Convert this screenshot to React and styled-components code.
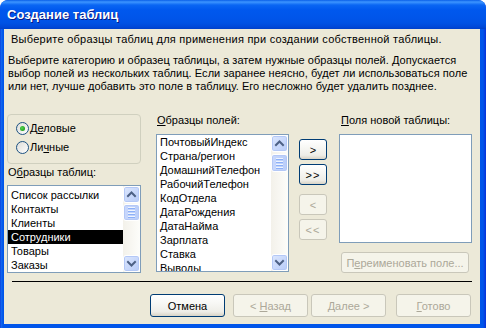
import React from 'react';
import styled, { createGlobalStyle } from 'styled-components';

const Global = createGlobalStyle`
  html, body { margin: 0; padding: 0; background: #ffffff; }
  body { font-family: "Liberation Sans", Arial, sans-serif; font-size: 11px; color: #000; }
  #root { width: 486px; height: 328px; }
`;

const Window = styled.div`
  width: 486px;
  height: 328px;
  box-sizing: border-box;
  display: flex;
  flex-direction: column;
  background: linear-gradient(to right, #0831D9 0px, #166AEE 1px, #0055EA 3px, #0055EA calc(100% - 3px), #0831D9 100%);
  border-radius: 8px 8px 0 0;
  overflow: hidden;
`;

const TitleBar = styled.div`
  height: 29px;
  flex: none;
  display: flex;
  align-items: center;
  padding: 0 0 0 7px;
  border-radius: 7px 7px 0 0;
  background: linear-gradient(to bottom, #0A5FE8 0px, #3D95FF 2px, #0A66F3 5px, #0058EE 10px, #0055EA 18px, #0052E4 23px, #0048D8 27px, #0041C8 29px);
  color: #fff;
  font-family: "Liberation Sans", Arial, sans-serif;
  font-weight: bold;
  font-size: 13px;
  text-shadow: 1px 1px 0 #0A1883;
`;

const Content = styled.div`
  flex: 1;
  margin: 0 6px 4px 4px;
  background: #ECE9D8;
  display: flex;
  flex-direction: column;
`;

const Header = styled.div`
  padding: 4px 0 0 7px;
  line-height: 13px;
  white-space: nowrap;
  letter-spacing: 0.25px;
`;

const Intro = styled.div`
  margin-top: 8px;
  padding-left: 4px;
  line-height: 13px;
  white-space: nowrap;
  letter-spacing: 0.05px;
`;

const Main = styled.div`
  margin-top: 20px;
  padding-left: 3px;
  display: flex;
  align-items: flex-start;
  height: 160px;
`;

const Column = styled.div`
  display: flex;
  flex-direction: column;
  width: ${p => p.$w}px;
  margin-left: ${p => p.$gap || 0}px;
  padding-top: ${p => p.$top || 0}px;
`;

const GroupBox = styled.div`
  margin-top: 1px;
  height: 50px;
  box-sizing: border-box;
  border: 1px solid #D0D0BF;
  border-radius: 4px;
  display: flex;
  flex-direction: column;
  padding: 7px 0 0 8px;
  gap: 6px;
`;

const RadioRow = styled.label`
  display: flex;
  align-items: center;
  height: 13px;
  line-height: 13px;
`;

const RadioText = styled.span`
  margin-left: 1px;
`;

const Label = styled.div`
  line-height: 13px;
  margin-top: ${p => p.$mt || 0}px;
  padding-left: ${p => p.$pl || 0}px;
  white-space: nowrap;
`;

const ListBox = styled.div`
  margin-top: ${p => p.$mt || 0}px;
  height: ${p => p.$h}px;
  box-sizing: border-box;
  border: 1px solid #7F9DB9;
  background: #fff;
  display: flex;
  overflow: hidden;
`;

const Items = styled.div`
  flex: 1;
  padding-top: ${p => p.$pt || 0}px;
  overflow: hidden;
`;

const Item = styled.div`
  height: 14px;
  line-height: 14px;
  padding-left: 3px;
  white-space: nowrap;
  background: ${p => (p.$selected ? '#000' : 'transparent')};
  color: ${p => (p.$selected ? '#fff' : '#000')};
`;

const ScrollTrack = styled.div`
  width: 17px;
  flex: none;
  display: flex;
  flex-direction: column;
  background: linear-gradient(to right, #F3F1EA, #FDFDFA);
`;

const ScrollBtn = styled.div`
  width: 17px;
  height: 17px;
  box-sizing: border-box;
  border: 1px solid #fff;
  border-radius: 3px;
  background: linear-gradient(to bottom right, #DCE7FE, #B7CBF8);
  box-shadow: inset 0 0 0 1px #B4C8F6;
  display: flex;
  align-items: center;
  justify-content: center;
  margin-top: ${p => (p.$auto ? 'auto' : '0')};
`;

const Thumb = styled.div`
  width: 17px;
  height: ${p => p.$h}px;
  margin-top: ${p => p.$mt}px;
  box-sizing: border-box;
  border: 1px solid #fff;
  border-radius: 3px;
  background: linear-gradient(to right, #C9D8FC, #B9CDF9);
  box-shadow: inset 0 0 0 1px #B4C8F6;
  display: flex;
  flex-direction: column;
  align-items: center;
  justify-content: center;
  gap: 1px;
`;

const Grip = styled.div`
  width: 7px;
  height: 1px;
  background: #EEF4FE;
  border-bottom: 1px solid #8CB0F8;
`;

const MoveButtons = styled.div`
  display: flex;
  flex-direction: column;
  padding-top: 26px;
`;

const XPButton = styled.button`
  width: ${p => p.$w}px;
  height: ${p => p.$h}px;
  margin: ${p => p.$m || '0'};
  box-sizing: border-box;
  padding: 0;
  font-family: "Liberation Sans", Arial, sans-serif;
  font-size: 11px;
  border-radius: 3px;
  border: 1px solid ${p => (p.disabled ? '#C9C7BA' : '#003C74')};
  color: ${p => (p.disabled ? '#ACA899' : '#000')};
  background: ${p =>
    p.disabled
      ? '#F5F4EA'
      : 'linear-gradient(to bottom, #FFFFFF 0%, #F7F7F4 40%, #EEEDE7 80%, #D8D3C6 100%)'};
  display: flex;
  align-items: center;
  justify-content: center;
  white-space: pre;
  letter-spacing: ${p => p.$ls || 0}px;
`;

const Separator = styled.div`
  margin: 8px 0 0 8px;
  width: 460px;
  height: 1px;
  background: #000;
`;

const Footer = styled.div`
  margin-top: 12px;
  padding-right: 9px;
  display: flex;
  justify-content: flex-end;
`;

const U = styled.u`
  text-decoration: underline;
  text-underline-offset: 1px;
`;

function Arrow({ dir }) {
  const d = dir === 'up' ? 'M4.5 9 L8 5.5 L11.5 9' : 'M4.5 6 L8 9.5 L11.5 6';
  return (
    <svg width="15" height="15" viewBox="0 0 15 15">
      <path d={d} fill="none" stroke="#4D6185" strokeWidth="2" strokeLinecap="square" transform="translate(-0.5 0)" />
    </svg>
  );
}

function Radio({ checked }) {
  return (
    <svg width="13" height="13" viewBox="0 0 13 13">
      <defs>
        <linearGradient id="rg" x1="0" y1="0" x2="1" y2="1">
          <stop offset="0" stopColor="#DCDCD7" />
          <stop offset="1" stopColor="#FFFFFF" />
        </linearGradient>
        <radialGradient id="dot" cx="0.4" cy="0.4" r="0.6">
          <stop offset="0" stopColor="#55D551" />
          <stop offset="1" stopColor="#21A121" />
        </radialGradient>
      </defs>
      <circle cx="6.5" cy="6.5" r="6" fill="url(#rg)" stroke="#1C5180" strokeWidth="1" />
      {checked && <circle cx="6.5" cy="6.5" r="2.5" fill="url(#dot)" />}
    </svg>
  );
}

function ScrollBar({ thumbTop, thumbH }) {
  return (
    <ScrollTrack>
      <ScrollBtn><Arrow dir="up" /></ScrollBtn>
      <Thumb $mt={thumbTop} $h={thumbH}>
        <Grip /><Grip /><Grip /><Grip />
      </Thumb>
      <ScrollBtn $auto><Arrow dir="down" /></ScrollBtn>
    </ScrollTrack>
  );
}

const tables = ['Список рассылки', 'Контакты', 'Клиенты', 'Сотрудники', 'Товары', 'Заказы'];
const fields = [
  'ПочтовыйИндекс',
  'Страна/регион',
  'ДомашнийТелефон',
  'РабочийТелефон',
  'КодОтдела',
  'ДатаРождения',
  'ДатаНайма',
  'Зарплата',
  'Ставка',
  'Выводы',
];

export default function App() {
  return (
    <>
      <Global />
      <Window>
        <TitleBar>Создание таблиц</TitleBar>
        <Content>
          <Header>Выберите образцы таблиц для применения при создании собственной таблицы.</Header>
          <Intro>
            Выберите категорию и образец таблицы, а затем нужные образцы полей. Допускается
            <br />
            выбор полей из нескольких таблиц. Если заранее неясно, будет ли использоваться поле
            <br />
            или нет, лучше добавить это поле в таблицу. Его несложно будет удалить позднее.
          </Intro>
          <Main>
            <Column $w={134}>
              <GroupBox>
                <RadioRow>
                  <Radio checked />
                  <RadioText>Д<U>е</U>ловые</RadioText>
                </RadioRow>
                <RadioRow>
                  <Radio />
                  <RadioText>Ли<U>ч</U>ные</RadioText>
                </RadioRow>
              </GroupBox>
              <Label $mt={2} $pl={1}>О<U>б</U>разцы таблиц:</Label>
              <ListBox $mt={6} $h={88}>
                <Items $pt={2}>
                  {tables.map(t => (
                    <Item key={t} $selected={t === 'Сотрудники'}>{t}</Item>
                  ))}
                </Items>
                <ScrollBar thumbTop={1} thumbH={17} />
              </ListBox>
            </Column>
            <Column $w={133} $gap={15}>
              <Label $mt={1} $pl={1}><U>О</U>бразцы полей:</Label>
              <ListBox $mt={7} $h={138}>
                <Items>
                  {fields.map(f => (
                    <Item key={f}>{f}</Item>
                  ))}
                </Items>
                <ScrollBar thumbTop={2} thumbH={18} />
              </ListBox>
            </Column>
            <Column $w={28} $gap={10}>
              <MoveButtons>
                <XPButton $w={28} $h={21}><span>&gt;</span></XPButton>
                <XPButton $w={28} $h={21} $m="4px 0 0 0" $ls={1}><span>&gt;&gt;</span></XPButton>
                <XPButton $w={28} $h={21} $m="9px 0 0 0" disabled><span>&lt;</span></XPButton>
                <XPButton $w={28} $h={21} $m="4px 0 0 0" $ls={1} disabled><span>&lt;&lt;</span></XPButton>
              </MoveButtons>
            </Column>
            <Column $w={133} $gap={12}>
              <Label $mt={1} $pl={2}><U>П</U>оля новой таблицы:</Label>
              <ListBox $mt={7} $h={109} />
              <XPButton $w={128} $h={21} $m="9px 0 0 2px" disabled>
                <span>П<U>е</U>реименовать поле...</span>
              </XPButton>
            </Column>
          </Main>
          <Separator />
          <Footer>
            <XPButton $w={75} $h={23}><span>Отмена</span></XPButton>
            <XPButton $w={75} $h={23} $m="0 0 0 8px" disabled><span>&lt; <U>Н</U>азад</span></XPButton>
            <XPButton $w={75} $h={23} $m="0 0 0 3px" disabled><span><U>Д</U>алее &gt;</span></XPButton>
            <XPButton $w={75} $h={23} $m="0 0 0 10px" disabled><span><U>Г</U>отово</span></XPButton>
          </Footer>
        </Content>
      </Window>
    </>
  );
}
